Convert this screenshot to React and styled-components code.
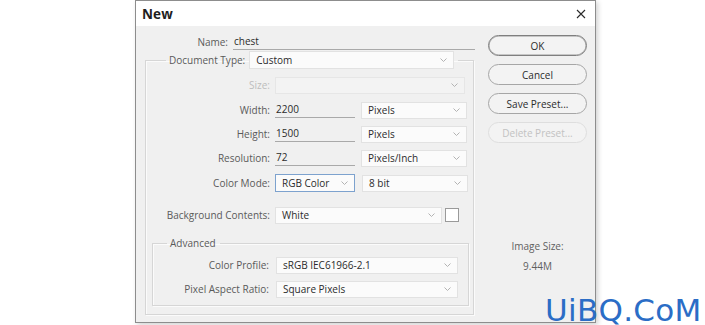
import React from "react";
import styled, { createGlobalStyle } from "styled-components";

const Global = createGlobalStyle`
  html, body { margin: 0; padding: 0; background: #fff; }
  body { font-family: "Open Sans", "Noto Sans", sans-serif; }
  * { box-sizing: border-box; }
`;

const Page = styled.div`
  position: relative;
  width: 705px;
  height: 325px;
  overflow: hidden;
  padding-left: 135px;
  background: #fff;
`;

const Dialog = styled.div`
  width: 461px;
  height: 323px;
  border: 1px solid #8d8d8d;
  background: #f0f0f0;
  display: flex;
  flex-direction: column;
  box-shadow: 2px 2px 5px rgba(0, 0, 0, 0.18);
`;

const TitleBar = styled.div`
  height: 25px;
  flex: none;
  background: #fff;
  display: flex;
  align-items: center;
  justify-content: space-between;
  padding: 0 9px 0 6px;
`;

const Title = styled.span`
  font-weight: 700;
  font-size: 13.5px;
  color: #1e1e1e;
  letter-spacing: 0.1px;
`;

const Body = styled.div`
  flex: 1;
  display: flex;
`;

const LeftPanel = styled.div`
  width: 342px;
  padding-left: 9px;
  display: flex;
  flex-direction: column;
`;

const RightPanel = styled.div`
  flex: 1;
  padding: 9px 0 0 10px;
  display: flex;
  flex-direction: column;
`;

const NameRow = styled.div`
  margin-top: 8px;
  height: 16px;
  display: grid;
  grid-template-columns: 83px 242px;
  column-gap: 5px;
  align-items: center;
`;

const Label = styled.span`
  text-align: right;
  font-size: 10px;
  line-height: 16px;
  color: ${(p) => (p.$disabled ? "#bdbdbd" : "#5a5a5a")};
  white-space: nowrap;
`;

const TextInput = styled.div`
  width: ${(p) => p.$w}px;
  height: 16px;
  font-size: 10px;
  line-height: 15px;
  color: #2b2b2b;
  padding-left: 1px;
  border-bottom: 1px solid #a9a9a9;
`;

const Group = styled.fieldset`
  margin: ${(p) => p.$margin};
  width: ${(p) => p.$w}px;
  padding: ${(p) => p.$pad};
  border: 1px solid #d6d6d6;
  box-shadow: inset 1px 1px 0 #fbfbfb, 1px 1px 0 #fbfbfb;
  min-width: 0;
`;

const Legend = styled.legend`
  margin-left: ${(p) => p.$ml}px;
  padding: 0 4px 0 3px;
  display: flex;
  align-items: center;
  gap: 4px;
  font-size: 10px;
  line-height: 16px;
  color: #5a5a5a;
`;

const Row = styled.div`
  height: 24px;
  margin-top: ${(p) => p.$mt || 0}px;
  display: grid;
  grid-template-columns: ${(p) => p.$labelW}px auto;
  column-gap: ${(p) => p.$gap}px;
  align-items: center;
`;

const Controls = styled.div`
  display: flex;
  align-items: center;
  gap: ${(p) => p.$gap || 6}px;
`;

const SelectBox = styled.div`
  width: ${(p) => p.$w}px;
  height: ${(p) => p.$h || 17}px;
  display: flex;
  align-items: center;
  justify-content: space-between;
  padding: 0 6px 0 6px;
  font-size: 10px;
  color: #2b2b2b;
  background: ${(p) => (p.$disabled ? "#f3f3f3" : "#fbfbfb")};
  border: 1px solid
    ${(p) => (p.$active ? "#7da2ce" : p.$disabled ? "#e6e6e6" : "#e2e2e2")};
  white-space: nowrap;
`;

const Swatch = styled.div`
  width: 14px;
  height: 14px;
  background: #fff;
  border: 1px solid #9a9a9a;
`;

const Button = styled.div`
  width: 99px;
  height: 21px;
  display: flex;
  align-items: center;
  justify-content: center;
  border-radius: 11px;
  border: 1px solid
    ${(p) => (p.$default ? "#7f7f7f" : p.$disabled ? "#dedede" : "#a6a6a6")};
  box-shadow: ${(p) => (p.$default ? "inset 0 0 0 0.5px #9a9a9a" : "none")};
  background: #f3f3f3;
  font-size: 10px;
  color: ${(p) => (p.$disabled ? "#c2c2c2" : "#2b2b2b")};
  margin-bottom: 8px;
`;

const InfoLabel = styled.div`
  margin-top: ${(p) => p.$mt}px;
  width: 99px;
  text-align: center;
  font-size: 10px;
  line-height: 14px;
  color: #5f5f5f;
`;

const Watermark = styled.div`
  position: absolute;
  left: 545px;
  top: 295px;
  font-family: "DejaVu Sans", Verdana, sans-serif;
  font-size: 31px;
  line-height: 30px;
  color: #2b6dc6;
  letter-spacing: 0.3px;
  white-space: nowrap;
`;

function Chevron() {
  return (
    <svg width="7" height="4" viewBox="0 0 7 4" style={{ flex: "none" }}>
      <path d="M0.5 0.5 L3.5 3.5 L6.5 0.5" fill="none" stroke="#b3b3b3" strokeWidth="1" />
    </svg>
  );
}

function Select({ value, w, h, active, disabled }) {
  return (
    <SelectBox $w={w} $h={h} $active={active} $disabled={disabled}>
      <span>{value}</span>
      <Chevron />
    </SelectBox>
  );
}

function CloseIcon() {
  return (
    <svg width="10" height="10" viewBox="0 0 10 10">
      <path d="M1 1 L9 9 M9 1 L1 9" stroke="#2a2a2a" strokeWidth="1.1" />
    </svg>
  );
}

function DocRow({ label, disabled, mt, children }) {
  return (
    <Row $labelW={124} $gap={5} $mt={mt}>
      <Label $disabled={disabled}>{label}</Label>
      {children}
    </Row>
  );
}

function AdvRow({ label, children }) {
  return (
    <Row $labelW={116} $gap={7}>
      <Label>{label}</Label>
      {children}
    </Row>
  );
}

export default function App() {
  return (
    <Page>
      <Global />
      <Dialog>
        <TitleBar>
          <Title>New</Title>
          <CloseIcon />
        </TitleBar>
        <Body>
          <LeftPanel>
            <NameRow>
              <Label>Name:</Label>
              <TextInput $w={242}>chest</TextInput>
            </NameRow>
            <Group $w={329} $margin="1px 0 0 0" $pad="4px 0 8px 0">
              <Legend $ml={20}>
                Document Type:
                <Select value="Custom" w={205} h={18} />
              </Legend>
              <DocRow label="Size:" disabled>
                <Controls>
                  <Select value="" w={190} disabled />
                </Controls>
              </DocRow>
              <DocRow label="Width:" mt={1}>
                <Controls $gap={6}>
                  <TextInput $w={80}>2200</TextInput>
                  <Select value="Pixels" w={106} />
                </Controls>
              </DocRow>
              <DocRow label="Height:">
                <Controls $gap={6}>
                  <TextInput $w={80}>1500</TextInput>
                  <Select value="Pixels" w={106} />
                </Controls>
              </DocRow>
              <DocRow label="Resolution:">
                <Controls $gap={6}>
                  <TextInput $w={80}>72</TextInput>
                  <Select value="Pixels/Inch" w={106} />
                </Controls>
              </DocRow>
              <DocRow label="Color Mode:" mt={1}>
                <Controls $gap={7}>
                  <Select value="RGB Color" w={80} h={18} active />
                  <Select value="8 bit" w={106} />
                </Controls>
              </DocRow>
              <DocRow label="Background Contents:" mt={8}>
                <Controls $gap={3}>
                  <Select value="White" w={167} />
                  <Swatch />
                </Controls>
              </DocRow>
              <Group $w={317} $margin="8px 0 0 6px" $pad="2px 0 4px 0">
                <Legend $ml={14}>Advanced</Legend>
                <AdvRow label="Color Profile:">
                  <Controls>
                    <Select value="sRGB IEC61966-2.1" w={182} />
                  </Controls>
                </AdvRow>
                <AdvRow label="Pixel Aspect Ratio:">
                  <Controls>
                    <Select value="Square Pixels" w={182} />
                  </Controls>
                </AdvRow>
              </Group>
            </Group>
          </LeftPanel>
          <RightPanel>
            <Button $default>OK</Button>
            <Button>Cancel</Button>
            <Button>Save Preset...</Button>
            <Button $disabled>Delete Preset...</Button>
            <InfoLabel $mt={88}>Image Size:</InfoLabel>
            <InfoLabel $mt={6}>9.44M</InfoLabel>
          </RightPanel>
        </Body>
      </Dialog>
      <Watermark>UiBQ.CoM</Watermark>
    </Page>
  );
}
